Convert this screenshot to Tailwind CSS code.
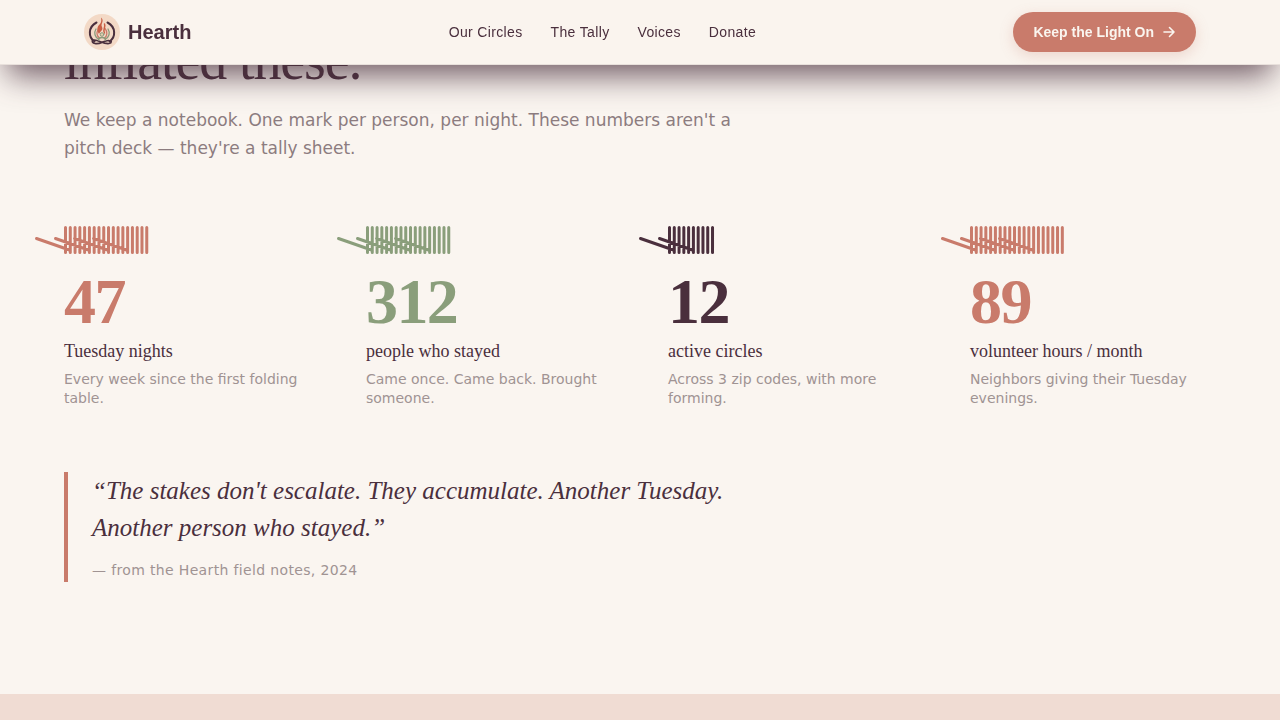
<!DOCTYPE html>
<html lang="en">
<head>
    <meta charset="UTF-8">
    <meta name="viewport" content="width=device-width, initial-scale=1.0">
    <title>Hearth</title>
    <script src="https://cdn.jsdelivr.net/npm/@tailwindcss/browser@4"></script>
</head>
<body class="bg-[#faf5f0] text-[#4a2f3d] font-['DejaVu_Sans',sans-serif] min-h-screen flex flex-col">
    <header class="fixed inset-x-0 top-0 z-10 bg-[#faf4ee] border-b border-[#4a2f3d]/10 shadow-[0_18px_32px_-8px_rgba(74,47,61,0.8)] font-['Liberation_Sans',sans-serif]">
        <div class="max-w-6xl h-16 mx-auto px-5 flex items-center justify-between">
            <a href="#" class="flex items-center gap-2 text-xl font-bold">
                <svg class="size-9" viewBox="0 0 36 36" fill="none" stroke-linecap="round" aria-hidden="true">
                    <circle cx="18" cy="18" r="18" fill="#f3d9c6"/>
                    <path d="M12.500 8.500C4 13 4 23 10.500 27.500M23.500 8.500C32 13 32 23 25.500 27.500" stroke="#4a2f3d" stroke-width="2"/>
                    <path d="M8.500 26.500C13 24.500 19 30.500 25 29.500C28 29 28 26.500 25 26.500C20 26 16 31 11 29.500C8.500 29 8 27.500 8.500 26.500Z" stroke="#4a2f3d" stroke-width="1.700"/>
                    <path d="M12 15C9.500 19 11 23 14.500 25M24 15C26.500 19 25 23 21.500 25" stroke="#8b9a7b" stroke-width="1.300"/>
                    <path d="M14.500 15C12 19 13 22 15.500 24M21 14.500C24 18 23 22 20.500 24" stroke="#c97b6b" stroke-width="1.300"/>
                    <path d="M17 3.500C21 7 16 10 18 13C19.500 16 16.500 17 15 20C12.500 16 13 12.500 16 10C17.500 8 17.500 6 17 3.500Z" fill="#c85f45"/>
                    <path d="M20.500 10C22 13 18.500 15 20.500 19" stroke="#c85f45" stroke-width="1.500"/>
                    <circle cx="18" cy="20.500" r="1.800" fill="#e3cdb0" stroke="#8b9a7b"/>
                    <path d="M14.500 26C14.500 22.500 21.500 22.500 21.500 26" stroke="#8b9a7b" stroke-width="1.500"/>
                </svg>
                Hearth
            </a>
            <nav class="flex gap-7 text-sm tracking-wide">
                <a href="#circles">Our Circles</a>
                <a href="#tally">The Tally</a>
                <a href="#voices">Voices</a>
                <a href="#donate">Donate</a>
            </nav>
            <button type="button" class="h-10 px-5 flex items-center gap-2 rounded-full bg-[#c97b6b] text-[#faf5ef] text-sm font-bold shadow-[0_4px_14px_rgba(201,123,107,0.25)]">
                Keep the Light On
                <svg class="size-3.5" viewBox="0 0 14 14" fill="none" stroke="currentColor" stroke-width="1.6" stroke-linecap="round" stroke-linejoin="round" aria-hidden="true">
                    <path d="M2 7h10M7.500 2.500L12 7l-4.500 4.500"/>
                </svg>
            </button>
        </div>
    </header>

    <main id="tally" class="w-full max-w-6xl mx-auto pt-[30px] pb-28">
        <h2 class="font-['Liberation_Serif',serif] text-[56px] leading-[60px] tracking-[-0.02em]">inflated these.</h2>
        <p class="mt-4 max-w-2xl text-[17px] leading-7 text-[#8c7c7f]">We keep a notebook. One mark per person, per night. These numbers aren't a pitch deck — they're a tally sheet.</p>

        <div class="mt-16 grid grid-cols-4 gap-14">
            <div>
                <svg class="tally block w-full h-7 overflow-visible text-[#c97b6b]" data-marks="18" data-slashes="4" aria-hidden="true"></svg>
                <p class="mt-4 font-['Liberation_Serif',serif] text-[64px] leading-16 font-bold tracking-tight text-[#c97b6b]">47</p>
                <h3 class="mt-1 font-['Liberation_Serif',serif] text-lg leading-[26px]">Tuesday nights</h3>
                <p class="mt-1.5 text-sm leading-[19px] text-[#a09393]">Every week since the first folding table.</p>
            </div>
            <div>
                <svg class="tally block w-full h-7 overflow-visible text-[#8a9e7b]" data-marks="18" data-slashes="4" aria-hidden="true"></svg>
                <p class="mt-4 font-['Liberation_Serif',serif] text-[64px] leading-16 font-bold tracking-tight text-[#8a9e7b]">312</p>
                <h3 class="mt-1 font-['Liberation_Serif',serif] text-lg leading-[26px]">people who stayed</h3>
                <p class="mt-1.5 text-sm leading-[19px] text-[#a09393]">Came once. Came back. Brought someone.</p>
            </div>
            <div>
                <svg class="tally block w-full h-7 overflow-visible" data-marks="10" data-slashes="2" aria-hidden="true"></svg>
                <p class="mt-4 font-['Liberation_Serif',serif] text-[64px] leading-16 font-bold tracking-tight">12</p>
                <h3 class="mt-1 font-['Liberation_Serif',serif] text-lg leading-[26px]">active circles</h3>
                <p class="mt-1.5 text-sm leading-[19px] text-[#a09393]">Across 3 zip codes, with more forming.</p>
            </div>
            <div>
                <svg class="tally block w-full h-7 overflow-visible text-[#c97b6b]" data-marks="20" data-slashes="4" aria-hidden="true"></svg>
                <p class="mt-4 font-['Liberation_Serif',serif] text-[64px] leading-16 font-bold tracking-tight text-[#c97b6b]">89</p>
                <h3 class="mt-1 font-['Liberation_Serif',serif] text-lg leading-[26px]">volunteer hours / month</h3>
                <p class="mt-1.5 text-sm leading-[19px] text-[#a09393]">Neighbors giving their Tuesday evenings.</p>
            </div>
        </div>

        <blockquote class="mt-16 max-w-2xl border-l-4 border-[#c97b6b] pl-6">
            <p class="font-['Liberation_Serif',serif] italic text-[25px] leading-[37px]">“The stakes don't escalate. They accumulate. Another Tuesday. Another person who stayed.”</p>
            <footer class="mt-3 text-sm leading-6 tracking-wide text-[#a09393]">— from the Hearth field notes, 2024</footer>
        </blockquote>
    </main>

    <section id="voices" class="grow bg-[#f0dcd3]"></section>

    <script>
        // upright marks, with a slash for every group
        document.querySelectorAll(".tally").forEach((svg) => {
            let d = "";
            for (let i = 0; i < Number(svg.dataset.marks); i++) {
                d += `M${1.5 + i * 4.78} 1.5V26.5`;
            }
            for (let i = 0; i < Number(svg.dataset.slashes); i++) {
                d += `M${-27.5 + i * 19} 12.5l33 11.5`;
            }
            svg.innerHTML = `<path d="${d}" fill="none" stroke="currentColor" stroke-width="3" stroke-linecap="round"/>`;
        });
    </script>
</body>
</html>
